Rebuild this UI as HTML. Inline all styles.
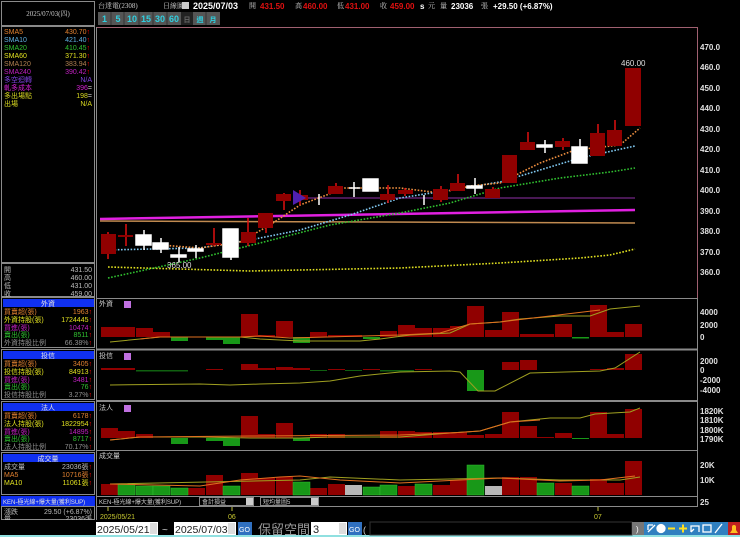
<!DOCTYPE html>
<html><head><meta charset="utf-8"><style>
html,body{margin:0;padding:0;background:#000;width:740px;height:537px;overflow:hidden}
svg{display:block}
text{font-family:"Liberation Sans","Noto Sans CJK TC",sans-serif}
.s{font-family:"Liberation Serif","Noto Serif CJK SC",serif;font-size:7px}
.ax{font-size:8px;font-weight:bold;fill:#e0e0e0}
.rc rect{stroke:none}
</style></head><body>
<svg width="740" height="537" viewBox="0 0 740 537" xmlns="http://www.w3.org/2000/svg">
<rect width="740" height="537" fill="#000"/>
<g fill="none" stroke="#8a8a8a" stroke-width="1">
<rect x="1.5" y="1.5" width="93" height="24"/>
<rect x="1.5" y="26.5" width="93" height="236"/>
<rect x="1.5" y="263.5" width="93" height="33"/>
<rect x="1.5" y="297.5" width="93" height="50"/>
<rect x="1.5" y="349.5" width="93" height="50"/>
<rect x="1.5" y="401.5" width="93" height="49"/>
<rect x="1.5" y="452.5" width="93" height="42"/>
<rect x="1.5" y="506.5" width="93" height="13"/>
</g>
<text x="48" y="16" class="s" fill="#c8c8c8" text-anchor="middle">2025/07/03(四)</text>
<g class="s">
<text x="4" y="34" fill="#e08030">SMA5</text><text x="90" y="34" fill="#e08030" text-anchor="end">430.70<tspan fill="#f00">↑</tspan></text>
<text x="4" y="42" fill="#60b0e0">SMA10</text><text x="90" y="42" fill="#60b0e0" text-anchor="end">421.40<tspan fill="#f00">↑</tspan></text>
<text x="4" y="50" fill="#30c030">SMA20</text><text x="90" y="50" fill="#30c030" text-anchor="end">410.45<tspan fill="#f00">↑</tspan></text>
<text x="4" y="58" fill="#e0e020">SMA60</text><text x="90" y="58" fill="#e0e020" text-anchor="end">371.30<tspan fill="#f00">↑</tspan></text>
<text x="4" y="66" fill="#b08050">SMA120</text><text x="90" y="66" fill="#b08050" text-anchor="end">383.94<tspan fill="#f00">↑</tspan></text>
<text x="4" y="74" fill="#c020c0">SMA240</text><text x="90" y="74" fill="#c020c0" text-anchor="end">390.42<tspan fill="#f00">↑</tspan></text>
<text x="4" y="82" fill="#8040e0">多空迴轉</text><text x="92" y="82" fill="#8040e0" text-anchor="end">N/A</text>
<text x="4" y="90" fill="#d020d0">軋多成本</text><text x="92" y="90" fill="#d020d0" text-anchor="end">396<tspan fill="#ccc">=</tspan></text>
<text x="4" y="98" fill="#d8d820">多出場點</text><text x="92" y="98" fill="#d8d820" text-anchor="end">198<tspan fill="#ccc">=</tspan></text>
<text x="4" y="106" fill="#d8d820">出場</text><text x="92" y="106" fill="#d8d820" text-anchor="end">N/A</text>
<text x="4" y="272" fill="#bbb">開</text><text x="92" y="272" fill="#bbb" text-anchor="end">431.50</text>
<text x="4" y="280" fill="#bbb">高</text><text x="92" y="280" fill="#bbb" text-anchor="end">460.00</text>
<text x="4" y="288" fill="#bbb">低</text><text x="92" y="288" fill="#bbb" text-anchor="end">431.00</text>
<text x="4" y="296" fill="#bbb">收</text><text x="92" y="296" fill="#bbb" text-anchor="end">459.00</text>
</g>
<g class="s">
<rect x="3" y="299" width="91" height="8" fill="#1030f0"/><text x="48" y="306" fill="#e0e0e0" text-anchor="middle">外資</text>
<text x="4" y="314" fill="#e08030">買賣超(張)</text><text x="92" y="314" fill="#e08030" text-anchor="end">1963<tspan fill="#f00">↑</tspan></text>
<text x="4" y="322" fill="#e0e020">外資持股(張)</text><text x="92" y="322" fill="#e0e020" text-anchor="end">1724445<tspan fill="#f00">↑</tspan></text>
<text x="4" y="330" fill="#c020c0">買進(張)</text><text x="92" y="330" fill="#c020c0" text-anchor="end">10474<tspan fill="#f00">↑</tspan></text>
<text x="4" y="337" fill="#30c030">賣出(張)</text><text x="92" y="337" fill="#30c030" text-anchor="end">8511<tspan fill="#f00">↑</tspan></text>
<text x="4" y="345" fill="#909090">外資持股比例</text><text x="92" y="345" fill="#909090" text-anchor="end">66.38%<tspan fill="#f00">↑</tspan></text>
<rect x="3" y="351" width="91" height="8" fill="#1030f0"/><text x="48" y="358" fill="#e0e0e0" text-anchor="middle">投信</text>
<text x="4" y="366" fill="#e08030">買賣超(張)</text><text x="92" y="366" fill="#e08030" text-anchor="end">3405<tspan fill="#f00">↑</tspan></text>
<text x="4" y="374" fill="#e0e020">投信持股(張)</text><text x="92" y="374" fill="#e0e020" text-anchor="end">84913<tspan fill="#f00">↑</tspan></text>
<text x="4" y="382" fill="#c020c0">買進(張)</text><text x="92" y="382" fill="#c020c0" text-anchor="end">3481<tspan fill="#f00">↑</tspan></text>
<text x="4" y="389" fill="#30c030">賣出(張)</text><text x="92" y="389" fill="#30c030" text-anchor="end">76<tspan fill="#f00">↑</tspan></text>
<text x="4" y="397" fill="#909090">投信持股比例</text><text x="92" y="397" fill="#909090" text-anchor="end">3.27%<tspan fill="#f00">↑</tspan></text>
<rect x="3" y="403" width="91" height="8" fill="#1030f0"/><text x="48" y="410" fill="#e0e0e0" text-anchor="middle">法人</text>
<text x="4" y="418" fill="#e08030">買賣超(張)</text><text x="92" y="418" fill="#e08030" text-anchor="end">6178<tspan fill="#f00">↑</tspan></text>
<text x="4" y="426" fill="#e0e020">法人持股(張)</text><text x="92" y="426" fill="#e0e020" text-anchor="end">1822954<tspan fill="#f00">↑</tspan></text>
<text x="4" y="434" fill="#c020c0">買進(張)</text><text x="92" y="434" fill="#c020c0" text-anchor="end">14895<tspan fill="#f00">↑</tspan></text>
<text x="4" y="441" fill="#30c030">賣出(張)</text><text x="92" y="441" fill="#30c030" text-anchor="end">8717<tspan fill="#f00">↑</tspan></text>
<text x="4" y="449" fill="#909090">法人持股比例</text><text x="92" y="449" fill="#909090" text-anchor="end">70.17%<tspan fill="#f00">↑</tspan></text>
<rect x="3" y="454" width="91" height="8" fill="#1030f0"/><text x="48" y="461" fill="#e0e0e0" text-anchor="middle">成交量</text>
<text x="4" y="469" fill="#bbb">成交量</text><text x="92" y="469" fill="#bbb" text-anchor="end">23036張<tspan fill="#f00">↑</tspan></text>
<text x="4" y="477" fill="#e08030">MA5</text><text x="92" y="477" fill="#e08030" text-anchor="end">10716張<tspan fill="#f00">↑</tspan></text>
<text x="4" y="485" fill="#e0e020">MA10</text><text x="92" y="485" fill="#e0e020" text-anchor="end">11061張<tspan fill="#f00">↑</tspan></text>
<rect x="1" y="496" width="94" height="10" fill="#1030f0"/><text x="3" y="504" fill="#e0e0e0" font-size="6">KEN-極光線+爆大量(獲利SUP)</text>
<text x="4" y="514" fill="#bbb">漲跌</text><text x="92" y="514" fill="#bbb" text-anchor="end">29.50 (+6.87%)</text>
<text x="4" y="521" fill="#bbb">量</text><text x="92" y="521" fill="#bbb" text-anchor="end">23036張</text>
</g>
<g font-size="8">
<text x="98" y="8" class="s" fill="#ccc">台達電(2308)</text>
<text x="163" y="8" class="s" fill="#ccc">日線圖</text>
<rect x="182" y="2" width="7" height="7" fill="#ccc"/>
<text x="193" y="9" font-weight="bold" font-size="9" fill="#fff">2025/07/03</text>
<text x="249" y="8" class="s" fill="#ccc">開</text><text x="260" y="9" font-weight="bold" fill="#e01010">431.50</text>
<text x="295" y="8" class="s" fill="#ccc">高</text><text x="303" y="9" font-weight="bold" fill="#e01010">460.00</text>
<text x="337" y="8" class="s" fill="#ccc">低</text><text x="345" y="9" font-weight="bold" fill="#e01010">431.00</text>
<text x="380" y="8" class="s" fill="#ccc">收</text><text x="390" y="9" font-weight="bold" fill="#e01010">459.00</text>
<text x="420" y="9" font-weight="bold" fill="#fff">s</text><text x="428" y="8" class="s" fill="#ccc">元</text>
<text x="440" y="8" class="s" fill="#ccc">量</text><text x="451" y="9" font-weight="bold" fill="#fff">23036</text><text x="481" y="8" class="s" fill="#ccc">張</text>
<text x="493" y="9" font-weight="bold" fill="#fff">+29.50 (+6.87%)</text>
</g>
<g font-size="9" font-weight="bold" fill="#30d0e0" text-anchor="middle">
<rect x="98" y="12" width="122" height="13" fill="#555"/>
<rect x="181" y="12" width="12" height="13" fill="#222"/>
<g stroke="#333" stroke-width="1"><line x1="111" y1="12" x2="111" y2="25"/><line x1="124" y1="12" x2="124" y2="25"/><line x1="139" y1="12" x2="139" y2="25"/><line x1="153" y1="12" x2="153" y2="25"/><line x1="167" y1="12" x2="167" y2="25"/><line x1="206" y1="12" x2="206" y2="25"/></g>
<text x="104.5" y="22">1</text><text x="118" y="22">5</text><text x="132" y="22">10</text><text x="146" y="22">15</text><text x="160" y="22">30</text><text x="174" y="22">60</text>
<text x="187" y="22" font-size="7" fill="#666">日</text><text x="200" y="22" font-size="7">週</text><text x="213" y="22" font-size="7">月</text>
</g>
<line x1="96.5" y1="27.5" x2="697.5" y2="27.5" stroke="#a06070"/>
<line x1="697.5" y1="27" x2="697.5" y2="298" stroke="#a06070"/>
<line x1="96.5" y1="27" x2="96.5" y2="520" stroke="#8a8a8a"/>
<g stroke="#8a8a8a"><line x1="96" y1="298.5" x2="697" y2="298.5"/><line x1="96" y1="349.5" x2="697" y2="349.5" stroke-width="2"/><line x1="96" y1="401" x2="697" y2="401" stroke-width="2"/><line x1="96" y1="450.5" x2="697" y2="450.5"/><line x1="96" y1="496.5" x2="697" y2="496.5"/><line x1="96" y1="506.5" x2="697" y2="506.5"/><line x1="697.5" y1="298" x2="697.5" y2="507"/></g>
<g class="ax">
<text x="700" y="50">470.0</text><text x="700" y="70">460.0</text><text x="700" y="91">450.0</text><text x="700" y="111">440.0</text><text x="700" y="132">430.0</text><text x="700" y="152">420.0</text><text x="700" y="173">410.0</text><text x="700" y="193">400.0</text><text x="700" y="214">390.0</text><text x="700" y="234">380.0</text><text x="700" y="255">370.0</text><text x="700" y="275">360.0</text>
<text x="700" y="315">4000</text><text x="700" y="328">2000</text><text x="700" y="340">0</text>
<text x="700" y="364">2000</text><text x="700" y="373">0</text><text x="700" y="383">-2000</text><text x="700" y="393">-4000</text>
<text x="700" y="414">1820K</text><text x="700" y="423">1810K</text><text x="700" y="433">1800K</text><text x="700" y="442">1790K</text>
<text x="700" y="468">20K</text><text x="700" y="483">10K</text><text x="700" y="505">25</text>
</g>
<line x1="100" y1="219" x2="635" y2="210" stroke="#e020e0" stroke-width="2.5"/>
<line x1="100" y1="221" x2="635" y2="223" stroke="#c08a50" stroke-width="1.5"/>
<line x1="295" y1="198" x2="635" y2="198" stroke="#602070" stroke-width="1.5"/>
<g fill="none" stroke-width="1.6" stroke-dasharray="1.6 1.6">
<polyline stroke="#e0e020" points="108,267 250,271 400,268 500,263 580,258 610,255 635,249"/>
<polyline stroke="#30c030" points="108,278 200,258 260,243 330,225 400,213 450,203 500,188 560,178 610,172 635,168"/>
<polyline stroke="#80c8f0" points="105,250 200,248 250,240 300,230 350,215 400,198 450,190 500,182 540,170 580,158 635,146"/>
<polyline stroke="#f09040" points="160,245 200,248 240,242 270,225 300,205 345,188 400,188 440,193 470,186 500,183 540,163 575,150 620,145 640,128"/>
</g>
<g stroke-width="1.5">
<g stroke="#e01010" fill="#900000" class="rc">
<line x1="108" y1="232" x2="108" y2="259"/><rect x="101" y="234" width="15" height="20"/>
<line x1="126" y1="224" x2="126" y2="246"/><rect x="118" y="235" width="15" height="2"/>
<line x1="214" y1="228" x2="214" y2="246"/><rect x="206" y="243" width="15" height="2"/>
<line x1="248" y1="218" x2="248" y2="246"/><rect x="241" y="232" width="15" height="11"/>
<line x1="266" y1="213" x2="266" y2="233"/><rect x="258" y="213" width="15" height="15"/>
<line x1="284" y1="193" x2="284" y2="210"/><rect x="276" y="194" width="15" height="7"/>
<line x1="300" y1="190" x2="300" y2="205"/><rect x="293" y="195" width="15" height="5"/>
<line x1="336" y1="183" x2="336" y2="194"/><rect x="328" y="186" width="15" height="8"/>
<line x1="388" y1="185" x2="388" y2="203"/><rect x="380" y="194" width="15" height="6"/>
<line x1="405" y1="188" x2="405" y2="196"/><rect x="398" y="190" width="15" height="4"/>
<line x1="441" y1="186" x2="441" y2="202"/><rect x="433" y="189" width="15" height="11"/>
<line x1="458" y1="174" x2="458" y2="191"/><rect x="450" y="183" width="15" height="8"/>
<line x1="493" y1="187" x2="493" y2="198"/><rect x="485" y="189" width="15" height="9"/>
<rect x="502" y="155" width="15" height="28"/>
<line x1="528" y1="132" x2="528" y2="150"/><rect x="520" y="142" width="15" height="8"/>
<line x1="563" y1="138" x2="563" y2="150"/><rect x="555" y="141" width="15" height="6"/>
<line x1="598" y1="124" x2="598" y2="156"/><rect x="590" y="133" width="15" height="23"/>
<line x1="615" y1="120" x2="615" y2="146"/><rect x="607" y="130" width="15" height="16"/>
<rect x="625" y="68" width="16" height="58"/>
</g>
<g stroke="#fff" fill="#fff">
<line x1="144" y1="230" x2="144" y2="250"/><rect x="136" y="235" width="15" height="10"/>
<line x1="161" y1="238" x2="161" y2="253"/><rect x="153" y="243" width="15" height="6"/>
<line x1="179" y1="247" x2="179" y2="262"/><rect x="171" y="255" width="15" height="2"/>
<line x1="196" y1="245" x2="196" y2="258"/><rect x="188" y="249" width="15" height="2"/>
<line x1="231" y1="229" x2="231" y2="260"/><rect x="223" y="229" width="15" height="28"/>
<line x1="319" y1="194" x2="319" y2="205"/>
<line x1="354" y1="182" x2="354" y2="197"/><line x1="349" y1="188" x2="360" y2="188"/>
<line x1="371" y1="179" x2="371" y2="191"/><rect x="363" y="179" width="15" height="12"/>
<line x1="424" y1="195" x2="424" y2="205"/>
<line x1="475" y1="178" x2="475" y2="194"/><rect x="467" y="186" width="15" height="2"/>
<line x1="545" y1="140" x2="545" y2="153"/><rect x="537" y="145" width="15" height="2"/>
<line x1="580" y1="139" x2="580" y2="147"/><rect x="572" y="147" width="15" height="16"/>
</g>
</g>
<polygon points="293,190 293,205 306,198" fill="#5020b0"/>
<text x="167" y="268" font-size="8" fill="#ddd">365.00</text>
<text x="621" y="66" font-size="8" fill="#ddd">460.00</text>
<g class="s" fill="#ccc">
<text x="99" y="306">外資</text><text x="99" y="358">投信</text><text x="99" y="410">法人</text><text x="99" y="458">成交量</text>
</g>
<rect x="124" y="301" width="7" height="7" fill="#c070e0"/><rect x="124" y="353" width="7" height="7" fill="#c070e0"/><rect x="124" y="405" width="7" height="7" fill="#c070e0"/>
<g fill="#900000">
<rect x="101" y="327" width="17" height="10"/><rect x="118" y="327" width="17" height="10"/><rect x="136" y="328" width="17" height="9"/><rect x="153" y="332" width="17" height="5"/>
<rect x="241" y="314" width="17" height="23"/><rect x="258" y="335" width="17" height="2"/><rect x="276" y="321" width="17" height="16"/>
<rect x="310" y="332" width="17" height="5"/><rect x="328" y="335" width="17" height="2"/><rect x="345" y="335" width="17" height="2"/>
<rect x="380" y="331" width="17" height="6"/><rect x="398" y="325" width="17" height="12"/><rect x="415" y="328" width="17" height="9"/><rect x="433" y="328" width="17" height="9"/><rect x="450" y="326" width="17" height="11"/><rect x="467" y="306" width="17" height="31"/><rect x="485" y="330" width="17" height="7"/><rect x="502" y="312" width="17" height="25"/><rect x="520" y="334" width="17" height="3"/><rect x="537" y="334" width="17" height="3"/><rect x="555" y="324" width="17" height="13"/><rect x="590" y="305" width="17" height="32"/><rect x="607" y="332" width="17" height="5"/><rect x="625" y="324" width="17" height="13"/>
</g>
<g fill="#189818">
<rect x="171" y="337" width="17" height="4"/><rect x="206" y="337" width="17" height="3"/><rect x="223" y="337" width="17" height="7"/><rect x="293" y="337" width="17" height="6"/><rect x="363" y="337" width="17" height="2"/><rect x="572" y="337" width="17" height="1.5"/>
</g>
<polyline fill="none" stroke="#a0a020" points="110,342 140,339 160,337 200,337 240,337 260,339 300,341 360,341 380,339 410,335 450,333 470,324 500,322 520,319 560,316 590,316 610,309 640,306"/>
<polyline fill="none" stroke="#e07020" points="140,339 160,337 200,337 240,337 260,336 290,338 400,335 440,333 470,324 500,322 600,310"/>
<g fill="#900000">
<rect x="101" y="368" width="34" height="2"/><rect x="206" y="369" width="17" height="1"/><rect x="241" y="364" width="17" height="6"/><rect x="258" y="368" width="17" height="2"/><rect x="276" y="367" width="17" height="3"/><rect x="293" y="368" width="17" height="2"/><rect x="328" y="369" width="17" height="1"/><rect x="363" y="369" width="17" height="1"/><rect x="415" y="369" width="17" height="1"/><rect x="502" y="362" width="17" height="8"/><rect x="520" y="360" width="17" height="10"/><rect x="590" y="369" width="17" height="1"/><rect x="607" y="368" width="17" height="2"/><rect x="625" y="354" width="17" height="16"/>
</g>
<g fill="#106010"><rect x="136" y="370" width="52" height="1.5"/><rect x="310" y="370" width="17" height="1"/><rect x="345" y="370" width="17" height="1"/><rect x="380" y="370" width="34" height="1.5"/></g>
<rect x="467" y="370" width="17" height="21" fill="#189818"/>
<polyline fill="none" stroke="#a0a020" points="110,385 200,384 230,385 260,384 300,383 330,381 360,376 400,372 450,371 460,372 478,391 495,391 530,373 600,371 615,368 640,352"/>
<g fill="#900000">
<rect x="101" y="428" width="17" height="10"/><rect x="118" y="431" width="17" height="7"/><rect x="136" y="434" width="17" height="4"/><rect x="241" y="416" width="17" height="22"/><rect x="258" y="434" width="17" height="4"/><rect x="276" y="423" width="17" height="15"/><rect x="310" y="434" width="17" height="4"/><rect x="328" y="434" width="17" height="4"/><rect x="380" y="431" width="17" height="7"/><rect x="398" y="431" width="17" height="7"/><rect x="415" y="432" width="17" height="6"/><rect x="433" y="432" width="17" height="6"/><rect x="450" y="432" width="17" height="6"/><rect x="467" y="435" width="17" height="3"/><rect x="485" y="434" width="17" height="4"/><rect x="502" y="412" width="17" height="26"/><rect x="520" y="426" width="17" height="12"/><rect x="537" y="437" width="17" height="1"/><rect x="555" y="433" width="17" height="5"/><rect x="590" y="412" width="17" height="26"/><rect x="607" y="434" width="17" height="4"/><rect x="625" y="409" width="17" height="29"/>
</g>
<g fill="#189818"><rect x="171" y="438" width="17" height="6"/><rect x="206" y="438" width="17" height="3"/><rect x="223" y="438" width="17" height="8"/><rect x="293" y="438" width="17" height="3"/><rect x="572" y="438" width="17" height="1"/></g>
<polyline fill="none" stroke="#a0a020" points="110,440 140,437 200,437 250,438 300,438 330,437 400,437 450,433 480,431 510,422 550,418 580,418 595,414 630,412 640,408"/>
<polyline fill="none" stroke="#e07020" points="110,440 140,437 250,436 400,435 450,433 480,431 510,422 540,420"/>
<g fill="#900000">
<rect x="101" y="484" width="17" height="11"/><rect x="188" y="488" width="17" height="7"/><rect x="206" y="475" width="17" height="20"/><rect x="241" y="473" width="17" height="22"/><rect x="258" y="478" width="17" height="17"/><rect x="276" y="477" width="17" height="18"/><rect x="310" y="488" width="17" height="7"/><rect x="328" y="484" width="17" height="11"/><rect x="398" y="486" width="17" height="9"/><rect x="433" y="485" width="17" height="10"/><rect x="450" y="480" width="17" height="15"/><rect x="502" y="477" width="17" height="18"/><rect x="520" y="477" width="17" height="18"/><rect x="555" y="483" width="17" height="12"/><rect x="590" y="479" width="17" height="16"/><rect x="607" y="483" width="17" height="12"/><rect x="625" y="461" width="17" height="34"/>
</g>
<g fill="#189818" stroke="#30c030" stroke-width="0.5">
<rect x="118" y="484" width="17" height="11"/><rect x="136" y="486" width="17" height="9"/><rect x="153" y="486" width="17" height="9"/><rect x="171" y="488" width="17" height="7"/><rect x="223" y="486" width="17" height="9"/><rect x="293" y="482" width="17" height="13"/><rect x="363" y="487" width="17" height="8"/><rect x="380" y="485" width="17" height="10"/><rect x="415" y="484" width="17" height="11"/><rect x="467" y="465" width="17" height="30"/><rect x="537" y="483" width="17" height="12"/><rect x="572" y="486" width="17" height="9"/>
</g>
<g fill="#b8b8b8"><rect x="345" y="485" width="17" height="10"/><rect x="485" y="486" width="17" height="9"/></g>
<polyline fill="none" stroke="#a0a020" points="110,484 300,480 330,477 400,480 500,478 560,480 620,480 640,477"/>
<polyline fill="none" stroke="#e07020" points="110,484 200,486 240,480 280,477 300,476 340,480 400,483 460,480 500,478 560,481 600,480 635,476"/>
<g class="s" fill="#ccc" font-size="6">
<text x="99" y="504" font-size="6">KEN-極光線+爆大量(獲利SUP)</text>
<rect x="199.5" y="497.5" width="54" height="8" fill="none" stroke="#888"/><text x="202" y="504" font-size="6">會計損益</text><rect x="246" y="498" width="7" height="7" fill="#ccc"/>
<rect x="260.5" y="497.5" width="58" height="8" fill="none" stroke="#888"/><text x="263" y="504" font-size="6">短均量圖5</text><rect x="311" y="498" width="7" height="7" fill="#ccc"/>
</g>
<g stroke="#c0c040"><line x1="108" y1="507" x2="108" y2="511"/><line x1="232" y1="507" x2="232" y2="511"/><line x1="598" y1="507" x2="598" y2="511"/></g>
<g class="s" fill="#c8c830"><text x="100" y="519">2025/05/21</text><text x="228" y="519">06</text><text x="594" y="519">07</text></g>
<rect x="0" y="520" width="740" height="17" fill="#000"/>
<rect x="0" y="535" width="740" height="2" fill="#90e0e0"/>
<g font-family="Liberation Serif,Noto Serif CJK SC,serif">
<rect x="96" y="522" width="62" height="13" fill="#fff"/><text x="97" y="533" font-size="10.5" fill="#222">2025/05/21</text><rect x="150" y="523" width="7" height="11" fill="#ddd"/>
<text x="162" y="533" font-size="10" fill="#ccc">~</text>
<rect x="174" y="522" width="62" height="13" fill="#fff"/><text x="175" y="533" font-size="10.5" fill="#222">2025/07/03</text><rect x="228" y="523" width="7" height="11" fill="#ddd"/>
<rect x="238" y="522" width="14" height="13" fill="#3070c0"/><text x="239" y="532" font-size="7" fill="#fff">GO</text>
<text x="258" y="534" font-size="13" fill="#999">保留空間</text>
<rect x="311" y="522" width="36" height="13" fill="#fff"/><text x="313" y="533" font-size="11" fill="#222">3</text><rect x="339" y="523" width="7" height="11" fill="#ddd"/>
<rect x="348" y="522" width="14" height="13" fill="#3070c0"/><text x="349" y="532" font-size="7" fill="#fff">GO</text>
</g>
<text x="363" y="533" font-size="9" fill="#ccc">(</text>
<rect x="370" y="522" width="262" height="13" fill="#000" stroke="#333"/>
<rect x="632" y="522" width="12" height="13" fill="#777"/><text x="636" y="532" font-size="8" fill="#fff">)</text>
<rect x="644" y="522" width="84" height="13" fill="#3080c0"/>
<g stroke="#fff" stroke-width="1.3" fill="none">
<path d="M648 532 L655 525 M648 525 L648 530 M648 525 L653 525"/>
<circle cx="661" cy="528.5" r="4" fill="#fff"/>
<line x1="668" y1="528.5" x2="675" y2="528.5" stroke="#ffe020" stroke-width="2"/>
<path d="M679 528.5 H687 M683 524.5 V532.5" stroke="#ffe020" stroke-width="2"/>
<path d="M691 532 V526 H699 V532 M691 532 L694 529"/>
<rect x="703" y="525" width="8" height="7"/>
<path d="M715 533 L722 524"/>
</g>
<rect x="728" y="522" width="12" height="13" fill="#c02020"/>
<path d="M730 533 H738 L736 530 V527 A2 2 0 0 0 732 527 V530 Z" fill="#ffc020"/>
</svg>
</body></html>
